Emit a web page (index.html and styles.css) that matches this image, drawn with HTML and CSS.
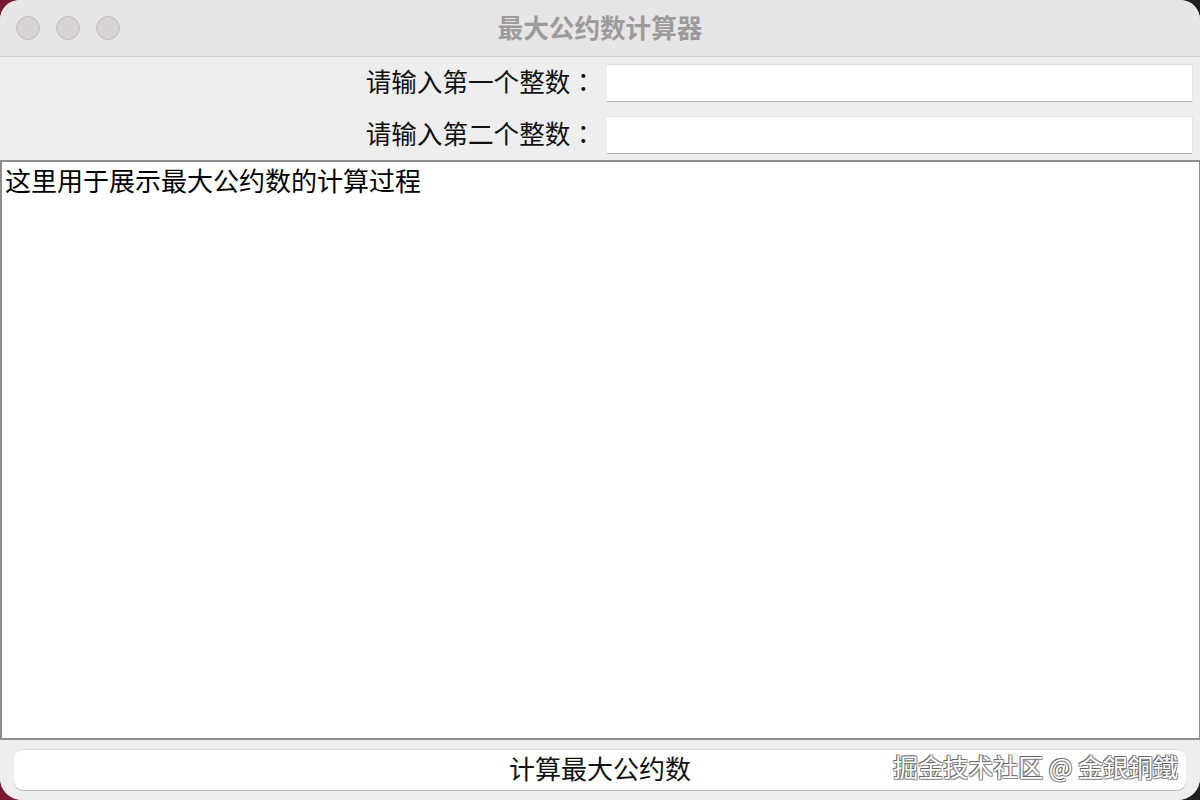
FILE: index.html
```html
<!DOCTYPE html>
<html lang="zh-CN">
<head>
<meta charset="utf-8">
<title>最大公约数计算器</title>
<link rel="stylesheet" href="styles.css">
</head>
<body>
<div class="window">
  <div class="titlebar">
    <div class="lights">
      <span class="light"></span>
      <span class="light"></span>
      <span class="light"></span>
    </div>
    <div class="title">最大公约数计算器</div>
  </div>
  <div class="content">
    <div class="form">
      <label class="label">请输入第一个整数<span class="colon" lang="zh-TW">：</span></label>
      <div class="input"></div>
      <label class="label">请输入第二个整数<span class="colon" lang="zh-TW">：</span></label>
      <div class="input"></div>
    </div>
    <div class="output">这里用于展示最大公约数的计算过程</div>
    <div class="footer">
      <div class="button">计算最大公约数</div>
      <div class="watermark">掘金技术社区 @ 金銀銅鐵</div>
    </div>
  </div>
</div>
</body>
</html>
```

FILE: styles.css
```css
html, body {
  margin: 0;
  padding: 0;
  width: 1200px;
  height: 800px;
  overflow: hidden;
}
body {
  background: linear-gradient(90deg, #7a1c30 0%, #5a2030 30%, #2a2a2a 70%, #1f1f1f 100%);
  font-family: "Noto Sans CJK SC", "Noto Sans", sans-serif;
}
.window {
  width: 1200px;
  height: 800px;
  border-radius: 20px 20px 22px 22px;
  overflow: hidden;
  background: #ececec;
  display: flex;
  flex-direction: column;
}
.titlebar {
  height: 56px;
  flex: none;
  background: #e8e5e6;
  border-bottom: 1px solid #d2d0d1;
  position: relative;
  display: flex;
  align-items: center;
}
.lights {
  display: flex;
  gap: 16px;
  padding-left: 16px;
}
.light {
  width: 22px;
  height: 22px;
  border-radius: 50%;
  background: #d7d3d4;
  border: 1px solid #c1bdbe;
}
.title {
  position: absolute;
  left: 0;
  right: 0;
  top: 0;
  height: 56px;
  line-height: 54px;
  text-align: center;
  font-size: 25.6px;
  font-weight: bold;
  color: #9c9a9b;
}
.content {
  flex: 1;
  display: flex;
  flex-direction: column;
  background: #eeeeee;
}
.form {
  display: grid;
  grid-template-columns: 1fr 585px;
  column-gap: 11px;
  row-gap: 15px;
  padding: 7px 8px 7px 0;
  align-items: center;
}
.label {
  text-align: right;
  font-size: 25.6px;
  line-height: 33px;
  padding-bottom: 4px;
  color: #111;
}
.colon {
  font-family: "Noto Sans CJK TC", "Noto Sans CJK JP", sans-serif;
}
.input {
  height: 36px;
  background: #ffffff;
  border-top: 1px solid #dcdcdc;
  box-shadow: 0 1px 0 #b4b4b4, 1px 0 0 #e4e4e4;
}
.output {
  flex: none;
  background: #ffffff;
  border: 2px solid #8e8e8e;
  border-right-width: 1px;
  box-sizing: border-box;
  height: 580px;
  padding: 0 3px;
  font-size: 26px;
  line-height: 35px;
  color: #000;
}
.footer {
  flex: 1;
  position: relative;
  padding: 9px 14px 0 14px;
}
.button {
  height: 40px;
  background: #ffffff;
  border-radius: 9px;
  border-top: 1px solid #dadada;
  box-shadow: 0 1px 0 #bdbdbd;
  text-align: center;
  font-size: 26px;
  line-height: 36px;
  color: #111;
}
.watermark {
  position: absolute;
  right: 22px;
  top: 7px;
  line-height: 38px;
  font-size: 25px;
  color: #ffffff;
  text-shadow: -1px -1px 0 #666, 1px 1px 0 #888, 1px -1px 0 #999, -1px 1px 0 #999;
  white-space: nowrap;
}
```
